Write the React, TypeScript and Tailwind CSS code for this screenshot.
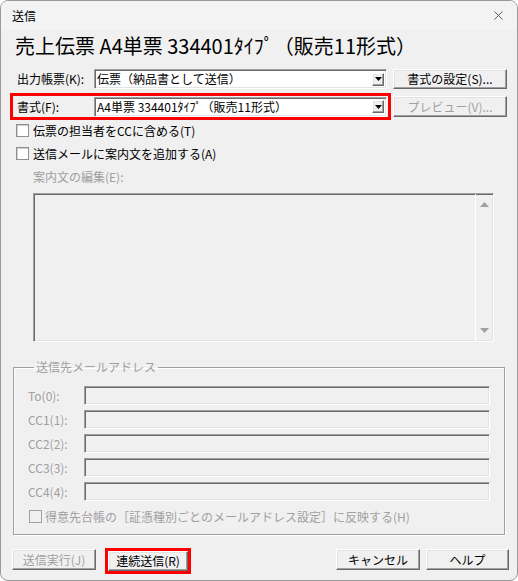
import { X } from "lucide-react";

const font = { fontFamily: '"Noto Sans CJK JP", "Noto Sans", sans-serif' };

const sunken =
  "border border-t-[#a0a0a0] border-l-[#a0a0a0] border-b-white border-r-white shadow-[inset_1px_1px_0_#696969,inset_-1px_-1px_0_#e3e3e3]";
const raised =
  "border border-t-white border-l-white border-b-[#696969] border-r-[#696969] shadow-[inset_-1px_-1px_0_#a0a0a0,inset_1px_1px_0_#e3e3e3] bg-[#f0f0f0]";

const Combo = ({ value }: { value: string }) => (
  <div className={`w-[293px] h-[20px] bg-white flex items-center ${sunken}`}>
    <span className="pl-[2px] text-[12px] leading-none text-black whitespace-nowrap">{value}</span>
    <div className={`ml-auto mr-[2px] w-[12px] h-[13px] flex items-center justify-center ${raised}`}>
      <svg width="7" height="4" viewBox="0 0 7 4">
        <path d="M0 0h7L3.5 4z" fill="#000" />
      </svg>
    </div>
  </div>
);

const Button = ({ label, disabled, className = "" }: { label: string; disabled?: boolean; className?: string }) => (
  <div
    className={`h-[21px] flex items-center justify-center text-[12px] leading-none whitespace-nowrap ${raised} ${
      disabled ? "text-[#a0a0a0]" : "text-black"
    } ${className}`}
  >
    {label}
  </div>
);

const Check = ({ disabled }: { disabled?: boolean }) => (
  <div
    className={`w-[13px] h-[13px] shrink-0 border ${
      disabled ? "bg-[#f0f0f0] border-[#a0a0a0]" : "bg-white border-[#8f8f8f] shadow-[inset_1px_1px_0_#d0d0d0]"
    }`}
  />
);

const mailRows = ["To(0):", "CC1(1):", "CC2(2):", "CC3(3):", "CC4(4):"];

export default function App() {
  return (
    <div className="w-[518px] h-[581px] bg-white" style={font}>
      <div className="w-full h-full rounded-[8px] border border-[#9a9a9a] bg-[#f0f0f0] overflow-hidden flex flex-col">
        {/* title bar */}
        <div className="h-[29px] shrink-0 flex items-center pl-[11px] pr-[11px] bg-[#f3f3f3]">
          <span className="text-[12px] text-black">送信</span>
          <X className="ml-auto w-[15px] h-[15px] text-[#333]" strokeWidth={1.2} />
        </div>

        <div className="flex flex-col">
          <div className="mt-[4px] h-[24px] pl-[14px] text-[20px] leading-[24px] font-normal text-black whitespace-nowrap">
            売上伝票 A4単票 334401ﾀｲﾌﾟ（販売11形式）
          </div>

          {/* row 1 */}
          <div className="mt-[11px] flex items-center pl-[16px]">
            <span className="w-[77px] text-[12px] leading-none text-black whitespace-nowrap">出力帳票(K):</span>
            <Combo value="伝票（納品書として送信）" />
            <Button label="書式の設定(S)..." className="ml-[6px] w-[114px] !h-[20px]" />
          </div>

          {/* row 2 */}
          <div className="mt-[4px] flex items-start pl-[9px]">
            <div className="w-[381px] h-[27px] border-[3px] border-[#ff0000] flex items-center pl-[4px]">
              <span className="w-[77px] text-[12px] leading-none text-black whitespace-nowrap">書式(F):</span>
              <Combo value="A4単票 334401ﾀｲﾌﾟ（販売11形式）" />
            </div>
            <Button label="プレビュー(V)..." disabled className="ml-[2px] mt-[3px] w-[114px]" />
          </div>

          <div className="mt-[4px] flex items-center pl-[15px]">
            <Check />
            <span className="ml-[4px] text-[12px] leading-none text-black">伝票の担当者をCCに含める(T)</span>
          </div>
          <div className="mt-[10px] flex items-center pl-[15px]">
            <Check />
            <span className="ml-[4px] text-[12px] leading-none text-black">送信メールに案内文を追加する(A)</span>
          </div>

          <div className="mt-[10px] pl-[32px] h-[14px] text-[12px] leading-[14px] text-[#a0a0a0]">案内文の編集(E):</div>

          <div className={`mt-[9px] ml-[32px] w-[461px] h-[149px] bg-[#f0f0f0] flex ${sunken}`}>
            <div className="ml-auto w-[18px] h-full border-l border-white flex flex-col items-center justify-between py-[8px]">
              <svg width="9" height="5" viewBox="0 0 9 5">
                <path d="M0 5h9L4.5 0z" fill="#a0a0a0" />
              </svg>
              <svg width="9" height="5" viewBox="0 0 9 5">
                <path d="M0 0h9L4.5 5z" fill="#a0a0a0" />
              </svg>
            </div>
          </div>

          {/* mail group */}
          <fieldset className="mt-[18px] ml-[12px] w-[492px] h-[175px] border border-[#a0a0a0] shadow-[1px_1px_0_#fff,inset_1px_1px_0_#fff] pl-[14px]">
            <legend className="ml-[6px] px-[2px] h-[14px] text-[12px] leading-[14px] text-[#a0a0a0]">
              送信先メールアドレス
            </legend>
            <div className="mt-[12px] flex flex-col gap-[5px]">
              {mailRows.map((r) => (
                <div key={r} className="flex items-center">
                  <span className="w-[56px] text-[12px] leading-none text-[#a0a0a0] whitespace-nowrap">{r}</span>
                  <div className={`w-[406px] h-[19px] bg-[#f0f0f0] ${sunken}`} />
                </div>
              ))}
            </div>
            <div className="mt-[9px] flex items-center pl-[1px]">
              <Check disabled />
              <span className="ml-[3px] text-[12px] leading-none text-[#a0a0a0] whitespace-nowrap">
                得意先台帳の［証憑種別ごとのメールアドレス設定］に反映する(H)
              </span>
            </div>
          </fieldset>

          {/* buttons */}
          <div className="mt-[13px] flex items-start pl-[11px]">
            <Button label="送信実行(J)" disabled className="mt-[1px] w-[84px]" />
            <div className="ml-[9px] w-[86px] h-[26px] border-[3px] border-[#ff0000]">
              <Button label="連続送信(R)" className="w-full !h-[20px]" />
            </div>
            <Button label="キャンセル" className="ml-auto mt-[1px] w-[84px]" />
            <Button label="ヘルプ" className="ml-[6px] mr-[8px] mt-[1px] w-[83px]" />
          </div>
        </div>
      </div>
    </div>
  );
}
